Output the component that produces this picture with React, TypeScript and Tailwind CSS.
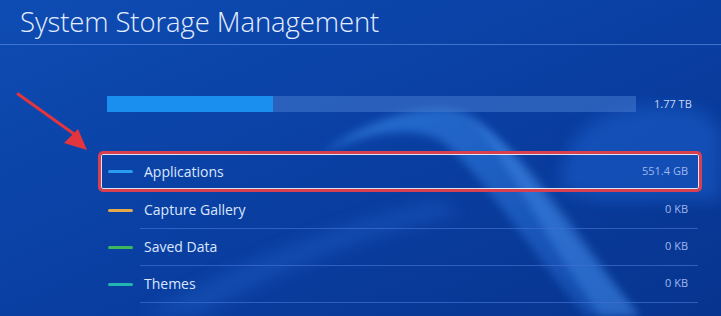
import { ReactNode } from 'react'

const ROWS = [
  { label: 'Capture Gallery', value: '0 KB', color: '#e3a94a' },
  { label: 'Saved Data', value: '0 KB', color: '#3cb85a' },
  { label: 'Themes', value: '0 KB', color: '#22b6b0' },
]

function Dash({ color }: { color: string }) {
  return <div className="w-[25px] h-[3px] rounded-full shrink-0" style={{ background: color }} />
}

function Row({ color, label, value }: { color: string; label: string; value: string }) {
  return (
    <div className="flex items-stretch h-[37px] pl-[10px]">
      <div className="flex items-center w-[32px]">
        <Dash color={color} />
      </div>
      <div className="flex-1 flex items-center justify-between pl-[4px] pr-[10px] mr-[4px] border-b border-[#3f6fd0]/70">
        <span className="text-[14px] text-[#dbe7ff]">{label}</span>
        <span className="text-[11px] text-[#9fb8ee]">{value}</span>
      </div>
    </div>
  )
}

function Backdrop(): ReactNode {
  return (
    <svg className="absolute inset-0 pointer-events-none" width="721" height="316" viewBox="0 0 721 316">
      <defs>
        <filter id="blur8"><feGaussianBlur stdDeviation="8" /></filter>
        <filter id="blur4"><feGaussianBlur stdDeviation="4" /></filter>
        <linearGradient id="band" x1="0" y1="0" x2="1" y2="1">
          <stop offset="0" stopColor="#3a8cf0" stopOpacity="0.6" />
          <stop offset="1" stopColor="#2a78e0" stopOpacity="0.3" />
        </linearGradient>
      </defs>
      {/* right glow */}
      <path d="M560 190 C 560 120, 620 95, 700 110 L 721 130 L 721 200 L 600 200 Z" fill="#1f62d0" opacity="0.5" filter="url(#blur8)" />
      {/* main wave */}
      <path d="M320 155 C 375 112, 440 100, 470 115 C 520 150, 560 230, 640 316 L 585 316 C 530 250, 480 170, 440 140 C 410 125, 365 132, 320 155 Z" fill="url(#band)" filter="url(#blur4)" />
      <path d="M470 118 C 510 160, 545 240, 600 316 L 640 316 C 580 240, 530 150, 470 118 Z" fill="#5aa6ff" opacity="0.3" filter="url(#blur4)" />
      {/* lower left soft band */}
      <path d="M140 316 C 260 250, 380 210, 440 200 L 460 215 C 380 230, 280 270, 200 316 Z" fill="#2d74de" opacity="0.25" filter="url(#blur8)" />
    </svg>
  )
}

export default function App() {
  return (
    <div
      className="relative w-[721px] h-[316px] overflow-hidden bg-gradient-to-br from-[#0e4cb3] via-[#0a3fa2] to-[#07348f]"
      style={{ fontFamily: '"Open Sans", "Noto Sans", sans-serif' }}
    >
      <Backdrop />

      {/* arrow */}
      <svg className="absolute left-0 top-0 pointer-events-none" width="120" height="160" viewBox="0 0 120 160">
        <line x1="18" y1="94" x2="74" y2="134" stroke="#e4343e" strokeWidth="3" strokeLinecap="round" />
        <polygon points="87,150 64,143 78,129" fill="#e4343e" />
      </svg>

      <div className="relative">
        <div className="h-[45px] border-b border-[#4d7fd6]/80 pl-[20px] pt-[4px]">
          <h1 className="text-[27.5px] font-light text-[#e4eeff] leading-[36px] tracking-[-0.1px]">System Storage Management</h1>
        </div>

        <div className="flex items-center mt-[51px] pl-[107px]">
          <div className="w-[529px] h-[16px] bg-[#4a7fd4]/50 flex">
            <div className="w-[166px] h-full bg-[#1a8fef]" />
          </div>
          <span className="ml-[18px] text-[11px] text-[#c6d6f6]">1.77 TB</span>
        </div>

        <div className="ml-[98px] w-[604px] mt-[38px]">
          <div className="h-[41px] border-[3px] border-[#d8404f] rounded-[5px] shadow-[inset_0_0_0_1px_rgba(255,255,255,0.85)] flex items-center pl-[7px] pr-[11px]">
            <div className="w-[32px] flex items-center">
              <Dash color="#2a9cf2" />
            </div>
            <div className="flex-1 flex items-center justify-between pl-[4px]">
              <span className="text-[14px] text-[#dbe7ff]">Applications</span>
              <span className="text-[11px] text-[#9fb8ee]">551.4 GB</span>
            </div>
          </div>
          {ROWS.map((r) => (
            <Row key={r.label} {...r} />
          ))}
        </div>
      </div>
    </div>
  )
}
